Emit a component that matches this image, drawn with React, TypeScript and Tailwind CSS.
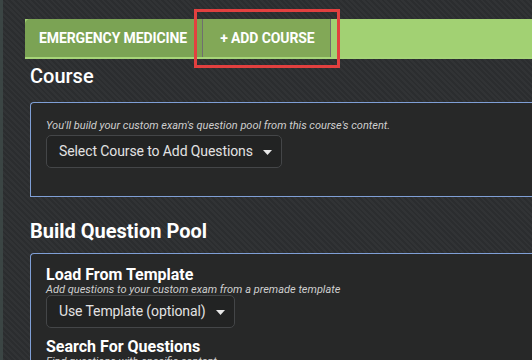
import React from 'react';

const Caret: React.FC = () => (
    <svg width="9" height="5" viewBox="0 0 9 5" className="ml-[10px] mt-[1px] shrink-0">
        <path d="M0 0 L9 0 L4.5 5 Z" fill="#e8e8e8" />
    </svg>
);

const DropButton: React.FC<{ label: string; width: string }> = ({ label, width }) => (
    <button
        className={`flex items-center h-[33px] px-[12px] rounded-[5px] border border-[#444648] bg-[#222323] text-[14px] tracking-[-0.1px] text-[#e2e2e2] whitespace-nowrap text-left ${width}`}
    >
        <span>{label}</span>
        <Caret />
    </button>
);

export default function App() {
    return (
        <div className="w-[532px] h-[360px] overflow-hidden flex bg-[#2d2f31] bg-[repeating-linear-gradient(45deg,#2b2d2f_0px,#2b2d2f_2px,#313335_2px,#313335_4px)] font-['Roboto',sans-serif] text-white">
            {/* левая полоса */}
            <div className="w-[3px] shrink-0 bg-[#3b4544]" />

            <div className="flex-1 pl-[22px] pt-[19px]">
                {/* вкладки */}
                <div className="relative flex h-[40px] bg-[#a2d173] border-b-2 border-[#a6d578]">
                    <div className="flex items-center pl-[14px] pr-[15px] rounded-tl-[5px] bg-[#7ba354] text-[14px] font-bold tracking-[-0.1px] whitespace-nowrap">
                        EMERGENCY MEDICINE
                    </div>
                    <div className="flex items-center pl-[17px] pr-[15px] bg-[#82a857] border-l border-r border-[#6f6f6f] text-[14px] font-bold tracking-[-0.1px] whitespace-nowrap">
                        + ADD COURSE
                    </div>
                    <div className="absolute left-[169px] top-[-10px] w-[146px] h-[59px] border-[3px] border-[#e2403f]" />
                </div>

                <div className="pl-[5px]">
                    <h2 className="mt-[4px] text-[20px] font-medium leading-[26px]">Course</h2>

                    <div className="mt-[13px] h-[95px] rounded-tl-[4px] border-l border-t border-b border-[#7f9fd6] bg-[#272828] pl-[15px] pt-[16px]">
                        <p className="text-[11px] italic text-[#cfcfcf] leading-[14px] whitespace-nowrap">
                            You'll build your custom exam's question pool from this course's content.
                        </p>
                        <div className="mt-[2px]">
                            <DropButton label="Select Course to Add Questions" width="w-[236px]" />
                        </div>
                    </div>

                    <h2 className="mt-[21px] text-[20px] font-bold leading-[26px]">Build Question Pool</h2>

                    <div className="mt-[9px] h-[120px] rounded-tl-[4px] border-l border-t border-[#7f9fd6] bg-[#272828] pl-[15px] pt-[12px]">
                        <h3 className="text-[16px] font-bold leading-[18px]">Load From Template</h3>
                        <p className="text-[11px] italic text-[#cfcfcf] leading-[11px] whitespace-nowrap">
                            Add questions to your custom exam from a premade template
                        </p>
                        <div>
                            <DropButton label="Use Template (optional)" width="w-[189px]" />
                        </div>
                        <h3 className="mt-[10px] text-[16px] font-bold leading-[18px]">Search For Questions</h3>
                        <p className="text-[11px] italic text-[#cfcfcf] leading-[11px] whitespace-nowrap">
                            Find questions with specific content
                        </p>
                    </div>
                </div>
            </div>
        </div>
    );
}
